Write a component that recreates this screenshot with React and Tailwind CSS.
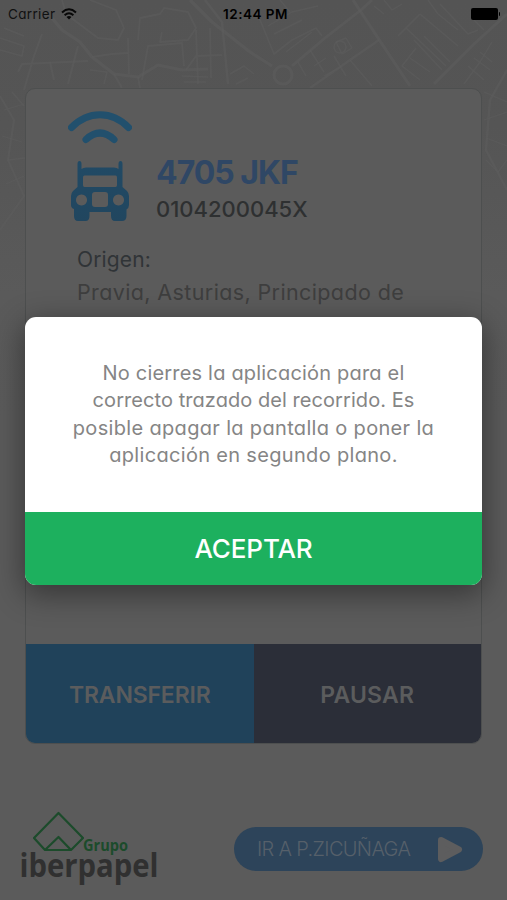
const roads = [
  { w: 3.2, d: 'M52 18 L62 30 L80 42 L92 57 L114 74 L138 77 L158 65 L182 70 L208 69' },
  { w: 3.2, d: 'M190 0 L212 22 L250 52 L272 66' },
  { w: 2.8, d: 'M292 66 L325 38 L361 10 L372 0' },
  { w: 3, d: 'M353 0 L380 41 L410 86' },
  { w: 2.2, d: 'M310 88 L350 60 L379 40' },
  { w: 3, d: 'M434 84 L474 44 L507 14' },
  { w: 2.4, d: 'M205 0 L222 22 L228 84' },
  { w: 2, d: 'M0 96 L14 120 L8 160 L24 196 L0 230' },
  { w: 2.4, d: 'M507 70 L490 100 L486 150 L507 190' },
  { w: 2, d: 'M18 72 L22 64 L88 61 M42 34 L34 56 L24 90' },
  { w: 2, d: 'M78 46 L68 84 M50 62 L54 80 M114 74 L122 88' },
  { w: 1.8, d: 'M62 0 L66 14 L98 38 L118 40 L124 28 L116 10 L90 0' },
  { w: 1.8, d: 'M128 38 L129 74 M142 80 L148 46 L182 43 L184 66' },
  { w: 1.8, d: 'M138 40 L140 18 L160 14 L164 8 L188 12 L196 28 L188 40 L160 42 L162 32' },
  { w: 1.8, d: 'M92 57 L112 54 L128 53 M138 77 L140 88' },
  { w: 1.8, d: 'M186 70 L196 56 L222 55 M196 30 L198 84 M210 28 L211 78' },
  { w: 1.6, d: 'M182 76 L208 77 M184 82 L206 82 M90 70 L107 72 L104 84' },
  { w: 1.6, d: 'M0 38 L24 46 L22 56 L0 50 M4 28 L24 36' },
  { w: 1.6, d: 'M230 74 L244 66 L254 74 M236 84 L248 78' },
  { w: 1.6, d: 'M256 10 L274 54 L292 40 L316 28 L322 36' },
  { w: 1.4, d: 'M268 26 L292 12 L318 6 M274 34 L302 20 M286 52 L312 32' },
  { w: 1.5, d: 'M298 62 L306 76 M310 50 L324 72 M334 56 L346 76 M350 60 L372 86' },
  { w: 1.4, d: 'M336 42 L346 38 L352 48 L342 54 Z M314 66 L326 58 M324 76 L342 66' },
  { w: 1.5, d: 'M398 36 L420 14 M406 28 L446 66 M420 14 L458 46' },
  { w: 1.4, d: 'M414 40 L442 70 M424 36 L450 62 M410 58 L430 72 M416 48 L402 66 L420 80' },
  { w: 1.4, d: 'M428 0 L438 14 L458 30 M440 4 L468 34 L478 30 M474 20 L484 30' },
  { w: 1.4, d: 'M480 52 L492 62 M474 58 L490 70 M468 66 L484 80 M492 42 L480 62 L464 84' },
  { w: 1.4, d: 'M384 0 L392 10 L402 4 M374 6 L384 14 M280 0 L290 12' },
  { w: 1.3, d: 'M4 110 L24 104 M2 136 L22 142 M8 160 L25 158 M6 184 L24 176 M12 92 L24 106' },
  { w: 1.3, d: 'M484 120 L507 112 M486 138 L507 146 M486 160 L498 172 L507 160 M484 92 L507 102' },
];

function CityMap() {
  return (
    <svg className="absolute inset-x-0 top-0 h-[420px] w-full" viewBox="0 0 507 420" preserveAspectRatio="none">
      <defs>
        <linearGradient id="fade" x1="0" y1="0" x2="0" y2="1">
          <stop offset="0" stopColor="#545454" />
          <stop offset="0.3" stopColor="#555555" />
          <stop offset="0.7" stopColor="#5a5a5a" />
          <stop offset="1" stopColor="#5b5b5b" />
        </linearGradient>
      </defs>
      <rect width="507" height="420" fill="url(#fade)" />
      <g fill="none" stroke="#5c5c5c" strokeLinejoin="round" strokeOpacity="0.65">
        {roads.map((r) => (
          <path key={r.d} d={r.d} strokeWidth={r.w} />
        ))}
        <circle cx="283" cy="75" r="9" strokeWidth="3" />
        <circle cx="340" cy="47" r="6" strokeWidth="1.5" />
      </g>
    </svg>
  );
}

function StatusBar() {
  return (
    <div className="relative grid h-7 grid-cols-3 items-center pl-2 pr-[7px] text-[13.5px] text-black">
      <div className="flex items-center gap-[6px]">
        <span className="tracking-[0.35px] text-[#111]">Carrier</span>
        <svg className="h-[12px] w-4" viewBox="0 0 16 12">
          <g fill="none" stroke="#080808" strokeWidth="2">
            <path d="M1 4.4 Q8 -1.8 15 4.4" />
            <path d="M3.6 7.2 Q8 3.4 12.4 7.2" />
          </g>
          <path d="M8 11.4 L5.5 8.9 Q8 7 10.5 8.9 Z" fill="#080808" />
        </svg>
      </div>
      <span className="pl-[3px] text-center font-semibold tracking-[0.5px]">12:44 PM</span>
      <div className="flex items-center justify-end gap-px">
        <span className="h-3 w-[27px] rounded-[2px] bg-black" />
        <span className="h-1 w-[1.5px] rounded-r bg-black" />
      </div>
    </div>
  );
}

function TruckIcon() {
  return (
    <svg className="h-[112px] w-16" viewBox="0 0 64 112">
      <defs>
        <linearGradient id="truck" x1="0" y1="0" x2="0" y2="1">
          <stop offset="0" stopColor="#214a65" />
          <stop offset="1" stopColor="#21465f" />
        </linearGradient>
      </defs>
      <g fill="none" stroke="#22506d" strokeLinecap="round">
        <path d="M3.5 17.5 C20 0.500 44 0.500 60.500 17.500" strokeWidth="7" />
        <path d="M18 29.500 Q32 16.500 46 29.500" strokeWidth="7" />
      </g>
      <path
        fill="url(#truck)"
        fillRule="evenodd"
        d="M9.5 54 Q9.5 51 11.5 51 Q13.500 51 13.500 54 V59 Q15 57.500 18 57.500 H46 Q49 57.500 50.500 59 V54 Q50.500 51 52.500 51 Q54.500 51 54.500 54 V77 L59 81 Q61 83 61 86 V95 Q61 98 58.500 99.500 V106 Q58.500 111 54 111 H47 Q43 111 43 106 V102 H21.500 V106 Q21.500 111 17.500 111 H10 Q6 111 6 106 V99 Q3 98 3 95 V86 Q3 83 5 81 L9.500 77 Z M16.500 65.500 Q15 65.500 15 67.500 V75 Q15 77 16.500 77 H47.500 Q49 77 49 75 V67.500 Q49 65.500 47.500 65.500 Z M27 82 Q24 82 24 85 V94 Q24 97 27 97 H37 Q40 97 40 94 V85 Q40 82 37 82 Z M13.500 84.500 a5.500 5.500 0 1 0 .01 0 Z M50.500 84.500 a5.500 5.500 0 1 0 .01 0 Z"
      />
    </svg>
  );
}

function RouteCard() {
  return (
    <section className="relative mx-[25px] mt-[60px] flex h-[656px] flex-col overflow-hidden rounded-[10px] border border-[#4d4f4f] bg-[#5b5b5b]">
      <div className="flex pl-[42px] pt-[21px]">
        <TruckIcon />
        <div className="pl-6 pt-[42px]">
          <h1 className="whitespace-nowrap text-[32px] font-bold leading-[42px] tracking-[-1px] text-[#2f4765]">4705 JKF</h1>
          <p className="whitespace-nowrap text-[22px] font-medium leading-[30px] text-[#2e3031]">0104200045X</p>
        </div>
      </div>
      <div className="pl-[51px] pt-[19px]">
        <p className="text-[21px] leading-[33px] tracking-[0.15px] text-[#303437]">Origen:</p>
        <p className="whitespace-nowrap text-[21.5px] leading-[33px] tracking-[0.38px] text-[#3e3e3e]">Pravia, Asturias, Principado de</p>
      </div>
      <div className="mt-auto flex h-[99px] text-[23px] font-semibold text-[#5b5c5d]">
        <button className="flex-1 bg-[#20425a] pt-[3px] tracking-[-0.15px]">TRANSFERIR</button>
        <button className="flex-1 bg-[#2b2e38] pt-[3px] tracking-[0.2px]">PAUSAR</button>
      </div>
    </section>
  );
}

function Logo() {
  return (
    <svg className="h-[84px] w-[148px]" viewBox="-4 0 148 84">
      <g fill="none" stroke="#1c4b2b" strokeWidth="2.2" strokeLinejoin="round">
        <path d="M39.500 3 L15 28 L26 40 H52 L64 28 Z" />
        <path d="M26 40 L39.500 27 L52 40" />
      </g>
      <text x="64" y="41" textLength="45" lengthAdjust="spacingAndGlyphs" fontSize="16.500" fontWeight="700" fill="#1c4b2b" className="font-['Open_Sans',sans-serif]">Grupo</text>
      <text x="0.5" y="67" textLength="139" lengthAdjust="spacingAndGlyphs" fontSize="32" fontWeight="700" fill="#303030" className="font-['Open_Sans',sans-serif]">iberpapel</text>
    </svg>
  );
}

function Footer() {
  return (
    <footer className="relative mt-[66px] flex items-start justify-between pl-[15px] pr-[24px]">
      <Logo />
      <button className="mt-[17px] flex h-11 w-[249px] items-center justify-between rounded-full bg-[#2d445a] pl-[23px] pr-[20px] text-[20px] font-light text-[#56606a]">
        <span className="whitespace-nowrap tracking-[-0.66px]">IR A P.ZICUÑAGA</span>
        <svg className="h-[27px] w-[26px]" viewBox="0 0 26 27">
          <path d="M4 4 L22 13.500 L4 23 Z" fill="#5d5d5e" stroke="#5d5d5e" strokeWidth="6" strokeLinejoin="round" />
        </svg>
      </button>
    </footer>
  );
}

const message = [
  { text: 'No cierres la aplicación para el', tracking: 'tracking-[0.19px]' },
  { text: 'correcto trazado del recorrido. Es', tracking: 'tracking-[0.06px]' },
  { text: 'posible apagar la pantalla o poner la', tracking: 'tracking-[0.33px]' },
  { text: 'aplicación en segundo plano.', tracking: 'tracking-[0.32px]' },
];

function Dialog() {
  return (
    <div className="absolute inset-x-[25px] top-[317px] flex h-[268px] flex-col overflow-hidden rounded-[11px] bg-white shadow-[0_8px_30px_2px_rgba(0,0,0,0.4)]">
      <div className="flex flex-1 flex-col items-center pt-[43px] text-[20px] leading-[27.3px] text-[#858585]">
        {message.map(({ text, tracking }) => (
          <p key={text} className={`whitespace-nowrap ${tracking}`}>{text}</p>
        ))}
      </div>
      <button className="h-[73px] bg-[#1db05e] text-[26px] font-medium tracking-[-0.1px] text-white">ACEPTAR</button>
    </div>
  );
}

export default function App() {
  return (
    <main className="relative h-[900px] w-full overflow-hidden bg-[#5b5b5b] font-[Inter,sans-serif] [font-feature-settings:'cv11']">
      <CityMap />
      <StatusBar />
      <RouteCard />
      <Footer />
      <Dialog />
    </main>
  );
}
